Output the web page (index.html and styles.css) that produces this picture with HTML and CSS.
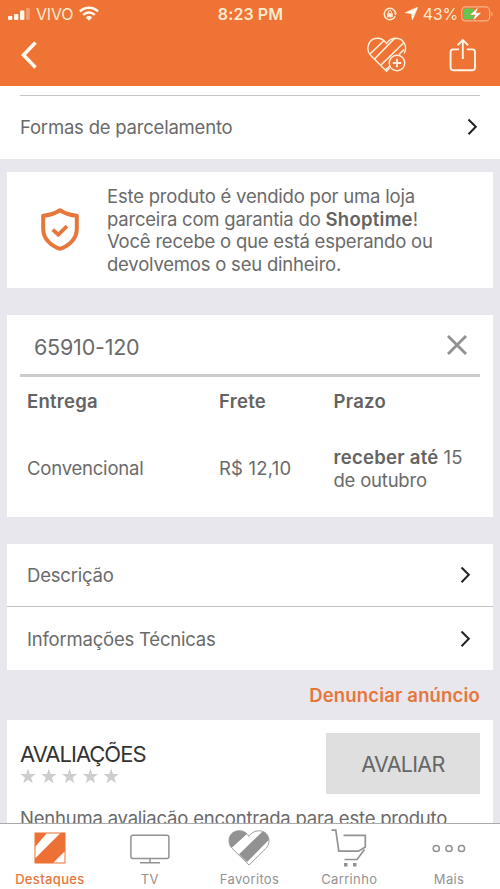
FILE: index.html
```html
<!DOCTYPE html>
<html lang="pt-BR">
<head>
<meta charset="utf-8">
<meta name="viewport" content="width=device-width, initial-scale=1">
<title>Shoptime</title>
<link rel="stylesheet" href="styles.css">
</head>
<body>
<div class="app">
  <header class="header">
    <div class="status">
      <div class="status-left">
        <svg class="signal" width="22" height="12" viewBox="0 0 22 12"><g fill="#fff8e8"><rect y="8" width="4.4" height="4" rx="1"/><rect x="6" y="6" width="4.4" height="6" rx="1"/><rect x="12" y="2.5" width="4.4" height="9.5" rx="1"/></g><rect x="18" width="3.8" height="12" rx="1" fill="#f39a6e"/></svg>
        <span class="carrier">VIVO</span>
        <svg class="wifi" width="20" height="15" viewBox="0 0 20 15"><g fill="none" stroke="#fffaf0" stroke-width="2.4"><path d="M.9 5.4a13 13 0 0 1 18.2 0"/><path d="M4.2 8.8a8.3 8.3 0 0 1 11.6 0"/></g><path d="M6.8 11.4a4.6 4.6 0 0 1 6.4 0L10 14.8z" fill="#fffaf0"/></svg>
      </div>
      <span class="clock">8:23 PM</span>
      <div class="status-right">
        <svg width="14" height="14" viewBox="0 0 14 14"><path d="M12.2 9.3A5.7 5.7 0 1 1 12.6 6" fill="none" stroke="#ffebcf" stroke-width="1.5"/><path d="M10.8 6.2h3.2l-1.5 2.4z" fill="#ffebcf"/><rect x="4" y="6.2" width="5.8" height="4" rx=".6" fill="#ffebcf"/><path d="M5.4 6.5V5a1.5 1.5 0 0 1 3 0v1.5" fill="none" stroke="#ffebcf"/></svg>
        <svg class="location" width="13" height="13" viewBox="0 0 13 13"><path d="M12.8.2 7.4 12.8 6.5 6.5.1 5.8z" fill="#fffaf0" stroke="#fffaf0" stroke-width=".6"/></svg>
        <span class="percent">43%</span>
        <svg class="battery" width="32" height="16" viewBox="0 0 32 16"><rect x=".6" y=".9" width="28" height="14" rx="4" fill="none" stroke="#f7b489" stroke-width="1.2"/><path d="M30.4 5.5c1.6 1 1.6 4 0 5z" fill="#f7b489"/><rect x="2.3" y="2.6" width="10.5" height="10.6" rx="2" fill="#62c554"/><path d="m17.7.8-9 8.2h5.2l-2.2 6.2 8.7-8.4h-5.3z" fill="#fff" stroke="#ee7334" stroke-width=".5"/></svg>
      </div>
    </div>
    <nav class="nav">
      <svg class="back" width="17" height="28" viewBox="0 0 17 28"><path d="M14.5 1.5 2.5 14l12 12.5" fill="none" stroke="#fffaf0" stroke-width="3.6"/></svg>
      <svg class="wish" width="40" height="36" viewBox="0 0 40 36"><defs><clipPath id="wish-heart"><path d="M19.5 34.2 3.3 18C-1.2 13 .8 1.4 10.1 1.2c4.4-.2 7.5 2.3 9.4 5.3 1.8-3 5-5.3 9.4-5.3 9.3.2 11.9 10.5 7.6 16.1z"/></clipPath></defs><g fill="none" stroke="#fff1de" stroke-width="1.4"><path d="M22.8 31 19.5 34.2 3.3 18C-1.2 13 .8 1.4 10.1 1.2c4.4-.2 7.5 2.3 9.4 5.3 1.8-3 5-5.3 9.4-5.3 8.8.2 11.6 9.5 8.2 15.3"/><g clip-path="url(#wish-heart)"><path d="M3 17 17.5 3M7 22.5 28 1M13.5 28.5 37 5.5M32 17.5l5-5M17 34l6-5" stroke-width="1.6"/></g><circle cx="30" cy="26" r="7.8"/><path d="M30 21.8v8.4M25.8 26h8.4" stroke-width="1.8"/></g></svg>
      <svg class="share" width="28" height="34" viewBox="0 0 28 34"><path d="M10 11.4H4.2c-1.7 0-2.6.9-2.6 2.6v15.6c0 1.7.9 2.6 2.6 2.6h19.2c1.7 0 2.6-.9 2.6-2.6V14c0-1.7-.9-2.6-2.6-2.6h-5.6M13.8 21V2M8.5 7.2 13.8 2l5.3 5.2" fill="none" stroke="#fff4e5" stroke-width="1.9"/></svg>
    </nav>
  </header>

  <main class="content">
    <section class="installments">
      <div class="installments-row"><span>Formas de parcelamento</span><svg class="chevron" width="11" height="18" viewBox="0 0 11 18"><path d="m1.5 1.5 7.3 7.3-7.3 7.5"/></svg></div>
    </section>

    <section class="card guarantee">
      <svg class="shield" width="38" height="43" viewBox="0 0 38 43"><path d="M19 2.2C14 5.4 8.5 7.2 2.2 7.7v13C2.2 30.5 9.4 37.8 19 40.8c9.6-3 16.8-10.3 16.8-20.1v-13C29.5 7.2 24 5.4 19 2.2z" fill="none" stroke="#e7763a" stroke-width="4" stroke-linejoin="round"/><path d="m11.7 21.6 5.6 5 8.7-8.4" fill="none" stroke="#e7763a" stroke-width="3.8"/></svg>
      <p class="guarantee-text">Este produto é vendido por uma loja<br>parceira com garantia do <b>Shoptime</b>!<br>Você recebe o que está esperando ou<br>devolvemos o seu dinheiro.</p>
    </section>

    <section class="card shipping">
      <div class="zip"><span>65910-120</span><svg class="clear" width="22" height="22" viewBox="0 0 22 22"><path d="m2 2 18 18M20 2 2 20" stroke="#929292" stroke-width="2.9"/></svg></div>
      <div class="rates head"><b>Entrega</b><b>Frete</b><b>Prazo</b></div>
      <div class="rates quote"><span>Convencional</span><span class="price">R$ 12,10</span><span class="deadline"><b>receber até</b> <span class="price">15</span><br>de outubro</span></div>
    </section>

    <section class="card details">
      <div class="detail-row"><span>Descrição</span><svg class="chevron" width="11" height="18" viewBox="0 0 11 18"><path d="m1.5 1.5 7.3 7.3-7.3 7.5"/></svg></div>
      <div class="detail-row"><span>Informações Técnicas</span><svg class="chevron" width="11" height="18" viewBox="0 0 11 18"><path d="m1.5 1.5 7.3 7.3-7.3 7.5"/></svg></div>
    </section>

    <div class="report">Denunciar anúncio</div>

    <section class="card reviews">
      <div class="reviews-top">
        <div>
          <h2 class="reviews-title">AVALIAÇÕES</h2>
          <svg class="stars" width="100" height="17" viewBox="0 0 100 17"><defs><path id="star" d="m8 .5 1.8 5.6h5.9L11 9.6l1.8 5.7L8 11.8l-4.8 3.5L5 9.6.3 6.1h5.9z"/></defs><g fill="#cdcdcd"><use href="#star"/><use href="#star" x="20.8"/><use href="#star" x="41.6"/><use href="#star" x="62.4"/><use href="#star" x="83.2"/></g></svg>
        </div>
        <button class="rate">AVALIAR</button>
      </div>
      <p class="empty">Nenhuma avaliação encontrada para este produto</p>
    </section>
  </main>

  <footer class="tabs">
    <div class="tab active"><svg width="32" height="32" viewBox="0 0 32 32"><rect width="31" height="31" x=".5" y=".5" fill="#ed7135"/><path d="M1.5 14.5 12.5 1.5H26L1.5 26zM19.5 30.5l11-11v11z" fill="#fff"/></svg><span>Destaques</span></div>
    <div class="tab"><svg width="40" height="32" viewBox="0 0 40 32"><g fill="none" stroke="#929292" stroke-width="1.5"><rect x=".9" y="3.2" width="38" height="23.3" rx="2"/><path d="M20 26.5v4M10 30.7h20"/></g></svg><span>TV</span></div>
    <div class="tab"><svg width="42" height="36" viewBox="0 0 42 37" preserveAspectRatio="none"><defs><clipPath id="fav-heart"><path d="M21 36 4 18.8C-2 12 1.5 1 10.7.8 15.5.6 19 3 21 6.6 23 3 26.5.8 31.3.8 40.5 1 44 12 38 18.8z"/></clipPath></defs><g clip-path="url(#fav-heart)"><path fill="#fff" d="M0 0h42v37H0z"/><path d="M0 0h20v3L3.5 18.5 0 20zM11 25 36 0l7 8-24 25z" fill="#929292"/></g><path d="M21 36 4 18.8C-2 12 1.5 1 10.7.8 15.5.6 19 3 21 6.6 23 3 26.5.8 31.3.8 40.5 1 44 12 38 18.8z" fill="none" stroke="#929292" stroke-width=".9"/></svg><span>Favoritos</span></div>
    <div class="tab"><svg width="36" height="38" viewBox="0 0 36 38"><path d="M.5 1.2h4.3l3 21h19.6L34.3 18V6.3H12.5M33.5 20.5l-7.5 10H13.5" fill="none" stroke="#929292" stroke-width="1.7"/><path d="M13 34h3.5v3.5H13zM22 34h3.5v3.5H22z" fill="#929292"/></svg><span>Carrinho</span></div>
    <div class="tab"><svg width="34" height="9" viewBox="0 0 34 9"><g fill="none" stroke="#929292" stroke-width="1.5"><circle cx="4.3" cy="4.5" r="3.1"/><circle cx="17" cy="4.5" r="3.1"/><circle cx="29.5" cy="4.5" r="3.1"/></g></svg><span>Mais</span></div>
  </footer>
</div>
</body>
</html>
```
FILE: styles.css
```css
* { box-sizing: border-box; }
body { margin: 0; background: #e8e7ee; color: #6a6a6a; font-family: Inter, "Liberation Sans", sans-serif; font-size: 18.5px; letter-spacing: -.21px; }
p, h2 { margin: 0; }
svg { display: block; flex: none; }
b { font-weight: 600; letter-spacing: .27px; color: #636363; }
.app { height: 889px; display: flex; flex-direction: column; overflow: hidden; }
.header { height: 85.5px; flex: none; background: #ee7334; color: #ffebcf; letter-spacing: 0; }
.status { height: 27px; display: grid; grid-template-columns: 1fr auto 1fr; align-items: center; padding: 0 7px 0 8px; font-size: 16px; }
.status-left, .status-right { display: flex; align-items: center; }
.status-right { justify-content: flex-end; }
.carrier { margin-left: 6px; letter-spacing: -.2px; }
.wifi { margin-left: 6px; }
.clock { font-weight: 600; letter-spacing: .1px; }
.location { margin-left: 8px; }
.percent { margin: 0 3px 0 5px; letter-spacing: -.2px; }
.nav { height: 58px; display: flex; align-items: flex-start; padding: 10px 23px 0 21px; }
.back { margin-top: 4px; }
.wish { margin: 0 42px 0 auto; }
.share { margin-top: 1px; }
.content { flex: 1; min-height: 0; overflow: hidden; }
.installments { height: 73.5px; background: #fff; padding: 9.5px 20px 0; }
.installments-row { height: 64px; border-top: 1px solid #c8c3c0; display: flex; align-items: center; justify-content: space-between; padding: 0 2px 2px 0; }
.chevron path { fill: none; stroke: #222; stroke-width: 2; }
.card { margin: 0 7px; background: #fff; }
.guarantee { height: 116px; margin-top: 13px; display: flex; padding: 13px 0 0 34px; }
.shield { margin-top: 23px; }
.guarantee-text { margin-left: 28px; line-height: 22.5px; white-space: nowrap; }
.shipping { height: 202px; margin-top: 27px; padding: 0 13px; }
.zip { height: 62px; border-bottom: 3px solid #ccc; display: flex; align-items: center; justify-content: space-between; padding: 4px 12px 0 14px; font-size: 21.5px; }
.clear { margin-top: -4px; }
.rates { display: grid; grid-template-columns: 192px 114.5px 1fr; padding-left: 7px; align-items: center; line-height: 23px; white-space: nowrap; }
.head { height: 48px; }
.quote { height: 86px; }
.price { letter-spacing: .2px; }
.deadline { padding-top: 2px; }
.details { height: 126px; margin-top: 27px; }
.detail-row { height: 63px; display: flex; align-items: center; justify-content: space-between; padding: 0 22px 0 20px; }
.detail-row:first-child { border-bottom: 1px solid #c8c3c0; }
.report { height: 50px; line-height: 51px; padding-right: 20px; text-align: right; color: #e7763a; font-weight: 600; letter-spacing: .17px; }
.reviews { height: 150px; padding: 13px 13px 0; }
.reviews-top { display: flex; justify-content: space-between; height: 61px; }
.reviews-title { color: #333; font-size: 22px; font-weight: 400; line-height: 26px; margin-top: 8px; letter-spacing: -1px; }
.stars { margin-top: 1px; }
.rate { width: 154px; height: 61px; padding: 0; border: 0; background: #dfdfdf; color: #666; font: 400 21.5px Inter, sans-serif; letter-spacing: -.7px; }
.empty { margin-top: 13px; line-height: 23px; white-space: nowrap; }
.tabs { height: 66px; flex: none; border-top: 1px solid #aaa; background: #fff; display: grid; grid-template-columns: repeat(5, 1fr); color: #929292; font-size: 13px; letter-spacing: .35px; padding-right: 1px; }
.tab { display: grid; grid-template-rows: 48px 15px; justify-items: center; align-items: center; line-height: 15px; }
.active { color: #e7763a; font-weight: 500; }
```
